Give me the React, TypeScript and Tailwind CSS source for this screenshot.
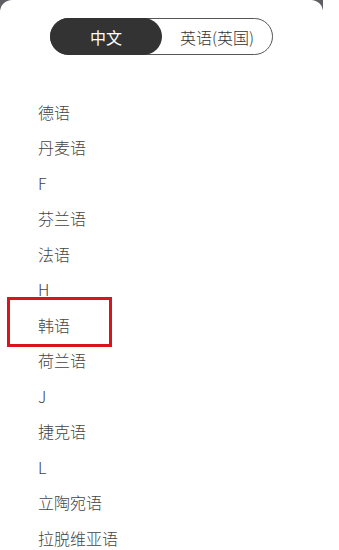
import React from "react";

const items = [
  "德语",
  "丹麦语",
  "F",
  "芬兰语",
  "法语",
  "H",
  "韩语",
  "荷兰语",
  "J",
  "捷克语",
  "L",
  "立陶宛语",
  "拉脱维亚语",
];

export default function App() {
  return (
    <div
      className="w-[339px] h-[550px] overflow-hidden bg-white"
      style={{ fontFamily: '"Noto Sans CJK SC", "Noto Sans", sans-serif' }}
    >
      <div className="w-[323px] h-[550px] bg-[#5d5f65]">
        <div className="relative h-[550px] bg-white rounded-t-[12px]">
          <div className="pt-[18px] flex justify-center">
            <div className="flex w-[223px] h-[37px] rounded-full border border-[#555] box-border">
              <div className="w-[112px] -ml-px -my-px h-[37px] rounded-full bg-[#333] text-white text-[16px] flex items-center justify-center">
                中文
              </div>
              <div className="flex-1 flex items-center justify-center text-[16px] font-light text-[#333]">
                英语(英国)
              </div>
            </div>
          </div>
          <div className="pt-[39px] pl-[38px]">
            {items.map((t, i) => (
              <div
                key={i}
                className="h-[35.5px] flex items-center text-[16px] font-light text-[#444] leading-none"
              >
                {t}
              </div>
            ))}
          </div>
          <div className="absolute left-[7px] top-[297px] w-[105px] h-[50px] border-[3px] border-[#d8141c]" />
        </div>
      </div>
    </div>
  );
}
